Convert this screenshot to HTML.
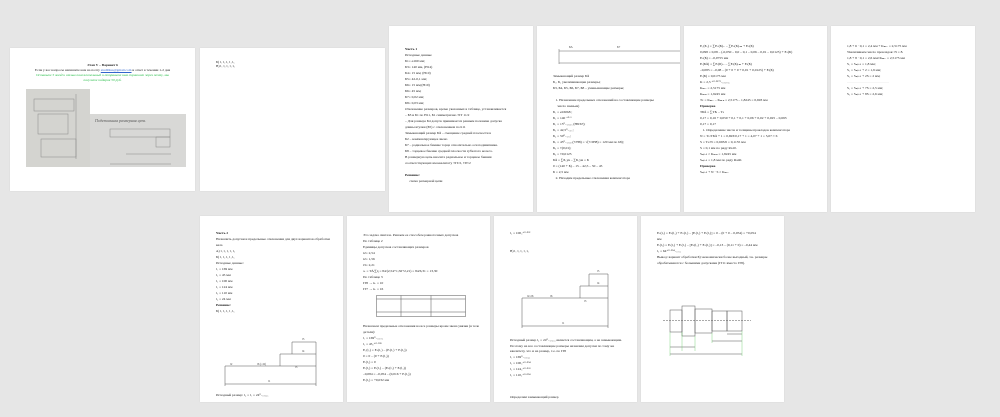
<!DOCTYPE html><html><head><meta charset="utf-8"><style>
body{margin:0;width:1000px;height:417px;background:#e6e6e6;position:relative;overflow:hidden;font-family:"Liberation Serif",serif}
.p{position:absolute;background:#fff;box-shadow:0 0 1px #ccc;overflow:hidden}
.t{position:absolute;font-size:3.5px;line-height:6px;color:#222;white-space:nowrap}
.t div{height:6px}
svg{position:absolute}
</style></head><body>
<div class="p" style="left:10px;top:48px;width:185px;height:143px">
 <div class="t" style="left:0;width:185px;top:15px;text-align:center;line-height:5px"><div style="height:5px"><b>Этап V – Вариант 6</b></div><div style="height:5px">Если у вас вопросы напишите нам на почту <span style="color:#36c;text-decoration:underline">studiblus@gmail.com</span> и ответ в течении 1-2 дня</div><div style="color:#2b4;font-style:italic;height:5px">Оставьте 5 звезд и отзыв положительный и отправьте нам скриншот через почту, мы</div><div style="color:#2b4;font-style:italic;height:5px">получите подарок 50 руб.</div></div>
 <div style="position:absolute;left:16px;top:41px;width:64px;height:78px;background:#d4d4d0"></div>
 <div style="position:absolute;left:80px;top:66px;width:96px;height:53px;background:#d8d8d6"></div>
 <div style="position:absolute;left:85px;top:70px;font-size:4px;font-style:italic;color:#555">Подетальная размерная цепь</div>
 <svg style="left:16px;top:41px" width="160" height="78"><g stroke="#888" stroke-width=".5" fill="none"><rect x="8" y="10" width="40" height="12"/><rect x="12" y="25" width="30" height="20"/><rect x="15" y="50" width="35" height="18"/><line x1="50" y1="5" x2="50" y2="70"/><rect x="84" y="40" width="60" height="8"/><line x1="84" y1="75" x2="145" y2="75"/><line x1="100" y1="65" x2="145" y2="65"/><rect x="130" y="48" width="14" height="10"/></g></svg>
</div>
<div class="p" style="left:200px;top:48px;width:185px;height:143px"><div class="t" style="left:16px;top:12px;line-height:4px"><div style="height:4px">Б) l₁ l₂ l₃ l₄ l₅</div><div style="height:4px">В) l₁ l₂ l₃ l₄ l₅</div></div></div>

<div class="p" style="left:389px;top:26px;width:144px;height:186px"><div class="t" style="left:16px;top:20px"><div><b>Часть 1</b></div><div>Исходные данные</div><div>Б1= ø160 мм;</div><div>Б3= 140 мм, (Н14)</div><div>Б4= 15 мм; (Н10)</div><div>Б5= 42-0,1 мм;</div><div>Б6= 15 мм;(Н10)</div><div>Б6= 45 мм;</div><div>Б7= 0,02 мм;</div><div>Б8= 0,03 мм;</div><div>Отклонение размеров, кроме указанных в таблице, устанавливается</div><div>– Б3 и Б1 по Н11, Б1 симметрично ±IT 11/2</div><div>– Для размера Б4 допуск принимается равным половине допуска</div><div>длины втулки (Б5) с отклонением по h11</div><div>Замыкающий размер Б∆ – смещение средней плоскости в</div><div>Б2 – компенсирующее звено</div><div>Б7 – радиальное биение торца относительно оси подшипника.</div><div>Б8 – торцевое биение средней плоскости зубчатого колеса.</div><div>В размерную цепь вносите радиальное и торцевое биения</div><div>соответствующих им квалитету ±IT/2, ±IT/2</div><div></div><div><b>Решение:</b></div><div>&nbsp;&nbsp;&nbsp;&nbsp;&nbsp;схема размерной цепи</div></div></div>

<div class="p" style="left:537px;top:26px;width:143px;height:186px">
 <svg style="left:20px;top:18px" width="123" height="22"><g stroke="#666" stroke-width=".5" fill="none"><line x1="2" y1="5" x2="2" y2="20"/><line x1="2" y1="7" x2="123" y2="7"/><line x1="2" y1="19" x2="123" y2="19"/></g><text x="12" y="4" font-size="3" fill="#444">Б∆</text><text x="60" y="4" font-size="3" fill="#444">Б7</text></svg>
 <div class="t" style="left:16px;top:47px"><div>Замыкающий размер Б∆</div><div>Б₁, Б₂ увеличивающие размеры;</div><div>Б3, Б4, Б5, Б6, Б7, Б8 – уменьшающие размеры;</div><div></div><div>&nbsp;&nbsp;&nbsp;1. Назначение предельных отклонений на составляющие размеры</div><div>&nbsp;&nbsp;&nbsp;&nbsp;&nbsp;число звеньев)</div><div>Б₁ = ø160h8 ;</div><div>Б₃ = 140 ⁺⁰·¹</div><div>Б₄ = 15⁰₋₀,₀₅₅ (Н8/h7);</div><div>Б₅ = 42,5⁰₋₀,₁;</div><div>Б₆ = 50⁰₋₀,₁;</div><div>Б₇ = 45⁰₋₀,₀₅₅(7/Н8) = √(7/2Н8) = 120 мм по h8);</div><div>Б₈ = ±(0,01);</div><div>Б₉ = ±0,0125</div><div>Б∆ = ∑Б₁ув – ∑Б₁ум = Б</div><div>0 = (140 + Б) – 15 – 42,5 – 50 – 45</div><div>Б = 2,5 мм</div><div>&nbsp;&nbsp;&nbsp;2. Находим предельные отклонения компенсатора</div></div></div>

<div class="p" style="left:684px;top:26px;width:143px;height:186px"><div class="t" style="left:16px;top:17px"><div>E₁(Б₁) = ∑Eₛ(Б)ᵤᵥ – ∑Eₛ(Б)ᵤₘ + Eₛ(Б)</div><div>0,098 = 0,08 – (-0,050 – 0,0 – 0,1 – 0,06 – 0,01 – 0,0125) + Eₛ(Б)</div><div>Eₛ(Б) = –0,0755 мм</div><div>Eᵢ(Б∆) = ∑Eᵢ(Б)ᵤᵥ – ∑Eᵢ(Б)ᵤₘ + Eᵢ(Б)</div><div>–0,085 = –0,08 – (0 + 0 + 0 + 0,01 + 0,0125) + Eᵢ(Б)</div><div>Eᵢ(Б) = 0,0175 мм</div><div>K = 2,5 ⁺⁰·⁰¹⁷⁵₋₀,₀₇₅₅</div><div>Kₘₐₓ = 2,5175 мм</div><div>Kₘᵢₙ = 1,9245 мм</div><div>Tₖ = Kₘₐₓ – Kₘᵢₙ = 2,5175 – 1,8245 = 0,693 мм</div><div><b>Проверка</b></div><div>TБ∆ = ∑TБᵢ – Tₖ</div><div>0,17 = 0,16 + 0,050 + 0,1 + 0,1 + 0,06 + 0,02 + 0,025 – 0,693</div><div>0,17 = 0,17</div><div>&nbsp;&nbsp;&nbsp;1. Определение числа и толщины прокладок компенсатора</div><div>N = Tₖ/TБ∆ + 1 = 0,693/0,17 + 1 = 4,07 + 1 = 5,07 ≈ 6</div><div>S = Tₖ/N = 0,693/6 = 0,1155 мм</div><div>S = 0,1 мм по ряду Ra10.</div><div>Sₙₚₒₖ ≥ Kₘᵢₙ = 1,8245 мм</div><div>Sₙₚₒₖ = 1,8 мм по ряду Ra40.</div><div><b>Проверка</b></div><div>Sₙₚₒₖ + N · S ≥ Kₘₐₓ</div></div></div>

<div class="p" style="left:831px;top:26px;width:144px;height:186px"><div class="t" style="left:16px;top:17px"><div>1,8 + 6 · 0,1 = 2,4 мм + Kₘₐₓ = 2,5175 мм</div><div>Увеличиваем число прокладок: N = 8.</div><div>1,8 + 8 · 0,1 = 2,6 мм≥Kₘₐₓ = 2,5175 мм</div><div>S₁ = Sₙₚₒₖ = 1,8 мм;</div><div>S₂ = Sₙₚₒₖ + 2 = 1,9 мм;</div><div>S₃ = Sₙₚₒₖ + 2S = 2 мм;</div><div style="color:#ccc">————————————</div><div>S₄ = Sₙₚₒₖ + 7S = 2,5 мм;</div><div>S₅ = Sₙₚₒₖ + 8S = 2,6 мм;</div></div></div>

<div class="p" style="left:200px;top:216px;width:143px;height:186px">
 <div class="t" style="left:16px;top:14px"><div><b>Часть 2</b></div><div>Назначить допуски и предельные отклонения для двух вариантов обработки</div><div>вала</div><div>А) l₁ l₂ l₃ l₄ l₅</div><div>Б) l₁ l₂ l₃ l₄ l₅</div><div>Исходные данные:</div><div>l₁ = 169 мм</div><div>l₂ = 45 мм</div><div>l₃ = 100 мм</div><div>l₄ = 124 мм</div><div>l₅ = 110 мм</div><div>l₆ = 24 мм</div><div><b>Решение:</b></div><div>Б) l₁ l₂ l₃ l₄ l₅</div></div>
 <svg style="left:0;top:118px" width="143" height="56"><g stroke="#555" stroke-width=".5" fill="none"><path d="M25 32V52M25 50H116M116 32V52M25 32H116M80 32V20H116V32M92 20V8H116V20"/></g><g font-size="3" fill="#444"><text x="30" y="31">l2</text><text x="57" y="31">l6 (=l2)</text><text x="95" y="34">l3</text><text x="102" y="18">l4</text><text x="102" y="6">l5</text><text x="68" y="48">l1</text></g></svg>
 <div class="t" style="left:16px;top:176px"><div>Исходный размер: l₆ = l₁ = 24⁰₋₀,₀₃₃</div></div></div>

<div class="p" style="left:347px;top:216px;width:143px;height:186px">
 <div class="t" style="left:16px;top:16px"><div>Это задача синтеза. Решаем ее способом равноточных допусков</div><div>По таблице 2</div><div>Единицы допусков составляющих размеров</div><div>i2= 2,54</div><div>i2= 1,56</div><div>i3= 2,21</div><div>aᵥ = T∆/∑iⱼ = 84/(2,54+1,56+2,21) = 84/6,31 = 13,30</div><div>По таблице 3</div><div>IT8 → kᵥ = 10</div><div>IT7 → kᵥ = 16</div></div>
 <svg style="left:29px;top:79px" width="90" height="22"><g stroke="#555" stroke-width=".5" fill="none"><rect x=".5" y=".5" width="89" height="21"/><path d="M25 .5V21.5M55 .5V21.5M.5 4H89.5M.5 17H89.5"/></g></svg>
 <div class="t" style="left:16px;top:107px"><div>Назначаем предельные отклонения на все размеры кроме звена увязки (в теле</div><div>детали):</div><div>l₁ = 169⁰₋₀,₀₇₂</div><div>l₂ = 45₀⁺⁰·⁰³⁹</div><div>E₁(l₂) = Eₛ(l₁) – (Eᵢ(l₁) + Eᵢ(l₃))</div><div>0 = 0 – (0 + Eᵢ(l₃))</div><div>Eᵢ(l₃) = 0</div><div>Eᵢ(l₃) = Eᵢ(l₁) – (Eₛ(l₁) + Eᵢ(l₃))</div><div>–0,084 = –0,054 – (0,016 + Eᵢ(l₃))</div><div>Eᵢ(l₃) = +0,032 мм</div></div></div>

<div class="p" style="left:494px;top:216px;width:143px;height:186px">
 <div class="t" style="left:16px;top:14px"><div>l₃ = 100₀⁺⁰·⁰³²</div><div></div><div></div><div>В) l₁ l₂ l₃ l₄ l₅</div></div>
 <svg style="left:0;top:52px" width="143" height="70"><g stroke="#555" stroke-width=".5" fill="none"><path d="M28 30V60M28 58H114M114 30V60M28 30H114M86 30V18H114V30M95 18V6H114V18"/></g><g font-size="3" fill="#444"><text x="33" y="29">l2=l6</text><text x="56" y="29">l6</text><text x="90" y="34">l3</text><text x="103" y="16">l4</text><text x="103" y="4">l5</text><text x="68" y="56">l1</text></g></svg>
 <div class="t" style="left:16px;top:122px;line-height:5.5px"><div style="height:5.5px">Исходный размер l₆ = 24⁰₋₀,₀₃₃ является составляющим, а не замыкающим.</div><div style="height:5.5px">Поэтому на все составляющие размеры назначим допуски по тому же</div><div style="height:5.5px">квалитету, что и на размер, т.е. по IT8</div><div style="height:6px">l₁ = 169⁰₋₀,₀₆₃</div><div style="height:6px">l₂ = 100₀⁺⁰·⁰⁵⁴</div><div style="height:6px">l₃ = 124₀⁺⁰·⁰⁶³</div><div style="height:6px">l₄ = 110₀⁺⁰·⁰⁵⁴</div><div style="height:16px"></div><div>Определим замыкающий размер</div></div></div>

<div class="p" style="left:641px;top:216px;width:143px;height:186px">
 <div class="t" style="left:16px;top:14px"><div>Eₛ(l₅) = Eₛ(l₃) + Eₛ(l₁) – [Eᵢ(l₂) + Eᵢ(l₄)] = 0 – (0 + 0 – 0,054) = +0,054</div><div>мм</div><div>Eᵢ(l₅) = Eᵢ(l₃) + Eᵢ(l₁) – [Eₛ(l₂) + Eₛ(l₄)] = –0,13 – (0,11 + 0) = –0,44 мм</div><div>l₅ = 64⁺⁰·⁰⁵⁴₋₀,₄₄</div><div>Вывод: вариант обработки Б) экономически более выгодный, т.к. размеры</div><div>обрабатываются с большими допусками (IT11 вместо IT8).</div></div>
 <svg style="left:20px;top:85px" width="100" height="70"><g stroke="#555" stroke-width=".5" fill="none"><rect x="9" y="9" width="12" height="22"/><rect x="21" y="5" width="13" height="30"/><rect x="34" y="8" width="17" height="24"/><rect x="51" y="10" width="15" height="20"/><rect x="66" y="10" width="15" height="20"/><path d="M2 19.5H90" stroke-dasharray="2 1"/><path d="M9 53H81M9 46H34M51 40H81M66 33H81"/></g><g stroke="#6c6" stroke-width=".4"><path d="M9 31V55M21 31V50M34 35V50M51 32V42M81 30V55"/></g></svg>
</div>
</body></html>
